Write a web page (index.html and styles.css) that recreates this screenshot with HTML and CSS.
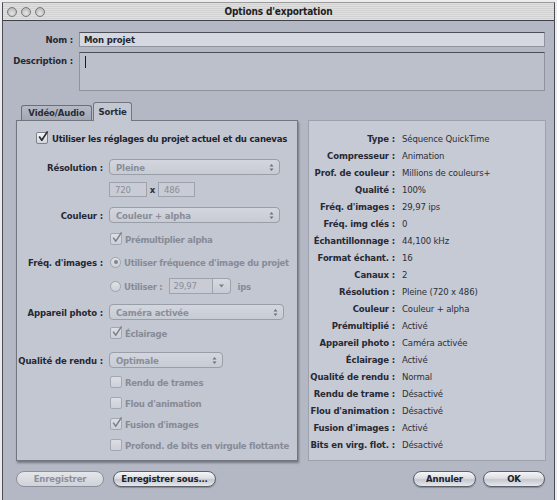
FILE: index.html
```html
<!DOCTYPE html>
<html lang="fr">
<head>
<meta charset="utf-8">
<title>Options d'exportation</title>
<link rel="stylesheet" href="styles.css">
</head>
<body>
<div class="window">
  <div class="titlebar">
    <div class="lights"><span class="light"></span><span class="light"></span><span class="light"></span></div>
    <div class="title">Options d'exportation</div>
    <div></div>
  </div>
  <div class="content">
    <div class="meta">
      <span class="lbl name-lbl">Nom :</span>
      <div class="field name-field">Mon projet</div>
      <span class="lbl desc-lbl">Description :</span>
      <div class="field desc-field"><span class="caret"></span></div>
    </div>

    <div class="main">
      <div class="tabs">
        <div class="tab tab-va">Vidéo/Audio</div>
        <div class="tab tab-out active">Sortie</div>
      </div>

      <div class="panel left">
        <div class="top-check">
          <span class="cb"><svg class="tick" viewBox="0 0 12 12"><path d="M2.2 5.6 L4.8 9.2 L10.6 0.4" /></svg></span>
          <span>Utiliser les réglages du projet actuel et du canevas</span>
        </div>

        <div class="group g-res">
          <div class="frow">
            <span class="lbl">Résolution :</span>
            <div class="popup w-res"><span>Pleine</span><svg class="updown" viewBox="0 0 5 9"><path d="M0.5 3.5 L2.5 1 L4.5 3.5Z M0.5 5.5 L2.5 8 L4.5 5.5Z"/></svg></div>
          </div>
          <div class="frow">
            <span></span>
            <div class="size">
              <div class="tfield w-720">720</div>
              <span class="by">x</span>
              <div class="tfield w-486">486</div>
            </div>
          </div>
        </div>

        <div class="group g-col">
          <div class="frow">
            <span class="lbl">Couleur :</span>
            <div class="popup w-res"><span>Couleur + alpha</span><svg class="updown" viewBox="0 0 5 9"><path d="M0.5 3.5 L2.5 1 L4.5 3.5Z M0.5 5.5 L2.5 8 L4.5 5.5Z"/></svg></div>
          </div>
          <div class="frow">
            <span></span>
            <div class="opt"><span class="cb dis"><svg class="tick" viewBox="0 0 12 12"><path d="M2.2 5.6 L4.8 9.2 L10.6 0.4" /></svg></span><span>Prémultiplier alpha</span></div>
          </div>
        </div>

        <div class="group g-frq">
          <div class="frow">
            <span class="lbl">Fréq. d'images :</span>
            <div class="opt"><span class="radio"><span class="dot"></span></span><span>Utiliser fréquence d'image du projet</span></div>
          </div>
          <div class="frow">
            <span></span>
            <div class="opt">
              <span class="radio"></span><span>Utiliser :</span>
              <div class="combo">
                <div class="combo-field">29,97</div>
                <div class="combo-btn"><svg class="down" viewBox="0 0 5 4"><path d="M0 0.5 L5 0.5 L2.5 3.5Z"/></svg></div>
              </div>
              <span class="ips">ips</span>
            </div>
          </div>
        </div>

        <div class="group g-cam">
          <div class="frow">
            <span class="lbl">Appareil photo :</span>
            <div class="popup w-cam"><span>Caméra activée</span><svg class="updown" viewBox="0 0 5 9"><path d="M0.5 3.5 L2.5 1 L4.5 3.5Z M0.5 5.5 L2.5 8 L4.5 5.5Z"/></svg></div>
          </div>
          <div class="frow">
            <span></span>
            <div class="opt"><span class="cb dis"><svg class="tick" viewBox="0 0 12 12"><path d="M2.2 5.6 L4.8 9.2 L10.6 0.4" /></svg></span><span>Éclairage</span></div>
          </div>
        </div>

        <div class="group g-qual">
          <div class="frow">
            <span class="lbl">Qualité de rendu :</span>
            <div class="popup w-qual"><span>Optimale</span><svg class="updown" viewBox="0 0 5 9"><path d="M0.5 3.5 L2.5 1 L4.5 3.5Z M0.5 5.5 L2.5 8 L4.5 5.5Z"/></svg></div>
          </div>
          <div class="frow first-opt">
            <span></span>
            <div class="opt"><span class="cb dis"></span><span>Rendu de trames</span></div>
          </div>
          <div class="frow">
            <span></span>
            <div class="opt"><span class="cb dis"></span><span>Flou d'animation</span></div>
          </div>
          <div class="frow">
            <span></span>
            <div class="opt"><span class="cb dis"><svg class="tick" viewBox="0 0 12 12"><path d="M2.2 5.6 L4.8 9.2 L10.6 0.4" /></svg></span><span>Fusion d'images</span></div>
          </div>
          <div class="frow">
            <span></span>
            <div class="opt"><span class="cb dis"></span><span>Profond. de bits en virgule flottante</span></div>
          </div>
        </div>
      </div>

      <div class="panel right">
        <dl class="summary">
          <dt>Type :</dt><dd>Séquence QuickTime</dd>
          <dt>Compresseur :</dt><dd>Animation</dd>
          <dt>Prof. de couleur :</dt><dd>Millions de couleurs+</dd>
          <dt>Qualité :</dt><dd>100%</dd>
          <dt>Fréq. d'images :</dt><dd>29,97 ips</dd>
          <dt>Fréq. img clés :</dt><dd>0</dd>
          <dt>Échantillonnage :</dt><dd>44,100 kHz</dd>
          <dt>Format échant. :</dt><dd>16</dd>
          <dt>Canaux :</dt><dd>2</dd>
          <dt>Résolution :</dt><dd>Pleine (720 x 486)</dd>
          <dt>Couleur :</dt><dd>Couleur + alpha</dd>
          <dt>Prémultiplié :</dt><dd>Activé</dd>
          <dt>Appareil photo :</dt><dd>Caméra activée</dd>
          <dt>Éclairage :</dt><dd>Activé</dd>
          <dt>Qualité de rendu :</dt><dd>Normal</dd>
          <dt>Rendu de trame :</dt><dd>Désactivé</dd>
          <dt>Flou d'animation :</dt><dd>Désactivé</dd>
          <dt>Fusion d'images :</dt><dd>Activé</dd>
          <dt>Bits en virg. flot. :</dt><dd>Désactivé</dd>
        </dl>
      </div>
    </div>

    <div class="buttons">
      <div class="btn-group">
        <button class="btn disabled w-save">Enregistrer</button>
        <button class="btn w-saveas">Enregistrer sous...</button>
      </div>
      <div class="btn-group right-group">
        <button class="btn w-cancel">Annuler</button>
        <button class="btn w-ok">OK</button>
      </div>
    </div>
  </div>
</div>
</body>
</html>
```

FILE: styles.css
```css
* { box-sizing: border-box; }

html, body {
  margin: 0;
  padding: 0;
}

body {
  width: 557px;
  height: 500px;
  overflow: hidden;
  background: #ececee;
  font-family: "DejaVu Sans Condensed", "DejaVu Sans", "Liberation Sans", sans-serif;
  font-size: 9.5px;
  letter-spacing: -0.15px;
  color: #262833;
}

.window {
  margin: 2px 0 0 2px;
  width: 553px;
  height: 498px;
  border-left: 1px solid #4a4d56;
  border-right: 1px solid #4a4d56;
  border-top: 1px solid #9a9a9a;
  background: #b4b8c4;
  display: flex;
  flex-direction: column;
}

/* ---------- title bar ---------- */
.titlebar {
  height: 18px;
  border-bottom: 1px solid #3e4048;
  background: repeating-linear-gradient(to bottom, #e0e0e0 0, #e0e0e0 1px, #d2d2d2 1px, #d2d2d2 2px);
  display: grid;
  grid-template-columns: 1fr auto 1fr;
  align-items: center;
}

.lights {
  display: flex;
  gap: 4px;
  padding-left: 4px;
}

.light {
  width: 10px;
  height: 10px;
  border-radius: 50%;
  border: 1px solid #7a7a7a;
  background: radial-gradient(circle at 50% 65%, #e6e6e6 0, #c6c6c6 55%, #a8a8a8 100%);
}

.title {
  font-weight: bold;
  font-size: 10px;
  color: #1e1e22;
}

/* ---------- content ---------- */
.content {
  display: flex;
  flex-direction: column;
}

.lbl {
  font-weight: bold;
  text-align: right;
  white-space: nowrap;
  color: #262833;
}

.meta {
  display: grid;
  grid-template-columns: 70px 1fr;
  column-gap: 6px;
  row-gap: 5px;
  padding: 11px 9px 0 0;
}

.name-lbl { align-self: center; }
.desc-lbl { padding-top: 3px; }

.field {
  border: 1px solid #8f939d;
  border-top-color: #4c4f58;
}

.name-field {
  height: 15px;
  background: #d5d8e1;
  font-weight: bold;
  color: #24262e;
  padding-left: 4px;
  line-height: 13px;
}

.desc-field {
  height: 39px;
  background: #bcc0cb;
  padding: 3px 0 0 5px;
}

.caret {
  display: block;
  width: 1px;
  height: 12px;
  background: #1c1c1c;
}

/* ---------- main area ---------- */
.main {
  display: grid;
  grid-template-columns: 282px 238px;
  grid-template-rows: 18px 341px;
  column-gap: 10px;
  margin-top: 11px;
  padding-left: 13px;
}

.tabs {
  grid-column: 1;
  grid-row: 1;
  display: flex;
  align-items: flex-end;
  gap: 1px;
  padding-left: 5px;
  position: relative;
  z-index: 2;
}

.tab {
  height: 15px;
  line-height: 14px;
  text-align: center;
  font-weight: bold;
  color: #2a2c35;
  background: linear-gradient(#b6bac5, #a3a7b3);
  border: 1px solid #6b6f79;
  border-bottom: none;
  border-radius: 3px 3px 0 0;
}

.tab-va { width: 71px; }
.tab-out { width: 39px; }

.tab.active {
  height: 19px;
  line-height: 18px;
  margin-bottom: -1px;
  background: #c3c7d2;
  border-color: #72767f;
}

.panel {
  grid-row: 2;
}

.panel.left {
  grid-column: 1;
  background: #c3c7d2;
  border: 1px solid #72767f;
  box-shadow: 1px 2px 2px rgba(0, 0, 0, 0.35);
  padding-top: 9px;
  display: flex;
  flex-direction: column;
}

.panel.right {
  grid-column: 2;
  background: #c6cad4;
  border: 1px solid #9da1ac;
  padding-top: 9px;
}

/* ---------- left panel controls ---------- */
.top-check {
  display: flex;
  align-items: center;
  gap: 4px;
  height: 16px;
  padding-left: 19px;
  font-weight: bold;
  letter-spacing: -0.22px;
  color: #22242c;
}

.group {
  display: flex;
  flex-direction: column;
}

.g-res { margin-top: 13px; gap: 6px; }
.g-col { margin-top: 10px; gap: 8px; }
.g-frq { margin-top: 7px; gap: 8px; }
.g-cam { margin-top: 10px; gap: 5px; }
.g-qual { margin-top: 11px; gap: 5px; }
.g-qual .first-opt { margin-top: 1px; }

.frow {
  display: grid;
  grid-template-columns: 86px auto;
  column-gap: 6px;
  align-items: center;
  height: 16px;
}

.opt {
  display: flex;
  align-items: center;
  gap: 3px;
  font-weight: bold;
  letter-spacing: -0.28px;
  color: #878b96;
  white-space: nowrap;
}

.cb {
  position: relative;
  flex: none;
  width: 12px;
  height: 12px;
  border: 1px solid #7d818b;
  border-radius: 2px;
  background: linear-gradient(#f4f5f7, #d2d5dc);
}

.cb.dis {
  border-color: #a3a7b1;
  background: linear-gradient(#dcdee4, #ccd0d8);
  margin-left: 1px;
}

.tick {
  position: absolute;
  left: 0;
  top: -2px;
  width: 12px;
  height: 12px;
  overflow: visible;
}

.tick path {
  fill: none;
  stroke: #2a2c33;
  stroke-width: 1.7;
  stroke-linejoin: round;
}

.cb.dis .tick path { stroke: #7c808a; stroke-width: 1.5; }

.radio {
  position: relative;
  flex: none;
  width: 11px;
  height: 11px;
  margin-left: 1px;
  border-radius: 50%;
  border: 1px solid #9ea2ac;
  background: linear-gradient(#e0e2e7, #cdd0d8);
}

.dot {
  position: absolute;
  left: 2.5px;
  top: 2.5px;
  width: 4px;
  height: 4px;
  border-radius: 50%;
  background: #80848e;
}

.popup {
  height: 16px;
  display: flex;
  align-items: center;
  justify-content: space-between;
  padding: 0 5px 0 6px;
  border: 1px solid #9a9ea8;
  border-radius: 4px;
  background: linear-gradient(#d3d6de, #c7cbd4);
  font-weight: bold;
  color: #898d98;
  white-space: nowrap;
}

.w-res { width: 171px; }
.w-cam { width: 175px; }
.w-qual { width: 114px; }

.updown {
  width: 5px;
  height: 9px;
  fill: #6e727c;
}

.size {
  display: flex;
  align-items: center;
}

.tfield {
  height: 15px;
  line-height: 13px;
  padding-left: 5px;
  border: 1px solid #9ea2ac;
  background: #c9ccd5;
  color: #8a8e99;
}

.w-720 { width: 38px; }
.w-486 { width: 37px; }

.by {
  width: 11px;
  text-align: center;
  font-weight: bold;
  color: #2e3039;
}

.combo {
  display: flex;
  margin-left: 3px;
}

.combo-field {
  width: 44px;
  height: 16px;
  line-height: 14px;
  padding-left: 4px;
  border: 1px solid #9ea2ac;
  background: #c9ccd5;
  color: #8a8e99;
  font-weight: normal;
}

.combo-btn {
  width: 18px;
  height: 16px;
  border: 1px solid #9ea2ac;
  border-left: none;
  border-radius: 0 4px 4px 0;
  background: linear-gradient(#d6d9e0, #c6cad3);
  display: flex;
  align-items: center;
  justify-content: center;
}

.down {
  width: 5px;
  height: 4px;
  fill: #7a7e88;
}

.ips { margin-left: 4px; }

/* ---------- right panel summary ---------- */
.summary {
  margin: 0;
  display: grid;
  grid-template-columns: 86px 1fr;
  grid-auto-rows: 17px;
  column-gap: 7px;
  align-items: center;
}

.summary dt {
  font-weight: bold;
  text-align: right;
  white-space: nowrap;
  color: #272934;
}

.summary dd {
  margin: 0;
  white-space: nowrap;
  color: #2d2f38;
}

/* ---------- buttons ---------- */
.buttons {
  display: flex;
  justify-content: space-between;
  margin-top: 10px;
  padding: 0 9px 0 13px;
}

.btn-group {
  display: flex;
  gap: 9px;
}

.right-group { gap: 7px; }

.btn {
  height: 16px;
  padding: 0;
  border: 1px solid #5c606a;
  border-radius: 8px;
  background: linear-gradient(#f6f6f8 0%, #dcdee3 45%, #c5c8d0 55%, #e6e8ec 100%);
  box-shadow: 0 1px 1px rgba(0, 0, 0, 0.25);
  font-family: inherit;
  font-size: 9.5px;
  letter-spacing: -0.15px;
  font-weight: bold;
  color: #202228;
  line-height: 14px;
}

.btn.disabled {
  color: #8c909a;
  border-color: #8c909a;
  box-shadow: none;
  background: linear-gradient(#e4e6ea, #cfd2d9);
}

.w-save { width: 88px; }
.w-saveas { width: 103px; }
.w-cancel { width: 63px; }
.w-ok { width: 62px; }
```
